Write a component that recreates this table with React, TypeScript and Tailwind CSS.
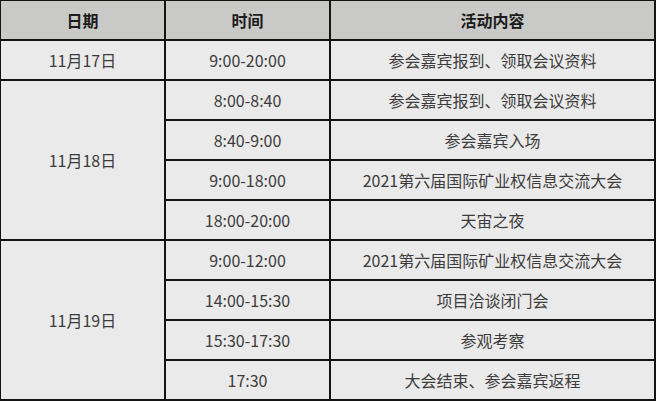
import React from 'react';

const font = { fontFamily: '"Noto Sans CJK SC", "Noto Sans", sans-serif' };

type Item = { time: string; text: string };

const days: { date: string; span: string; items: Item[] }[] = [
  { date: '11月17日', span: 'row-span-1', items: [{ time: '9:00-20:00', text: '参会嘉宾报到、领取会议资料' }] },
  {
    date: '11月18日',
    span: 'row-span-4',
    items: [
      { time: '8:00-8:40', text: '参会嘉宾报到、领取会议资料' },
      { time: '8:40-9:00', text: '参会嘉宾入场' },
      { time: '9:00-18:00', text: '2021第六届国际矿业权信息交流大会' },
      { time: '18:00-20:00', text: '天宙之夜' },
    ],
  },
  {
    date: '11月19日',
    span: 'row-span-4',
    items: [
      { time: '9:00-12:00', text: '2021第六届国际矿业权信息交流大会' },
      { time: '14:00-15:30', text: '项目洽谈闭门会' },
      { time: '15:30-17:30', text: '参观考察' },
      { time: '17:30', text: '大会结束、参会嘉宾返程' },
    ],
  },
];

const cell = 'flex items-center justify-center bg-[#ebeaea] text-[16px] text-[#3c3c3c]';
const head = 'flex items-center justify-center bg-[#c9cac8] text-[16px] font-bold text-[#1c1c1c]';

export default function App() {
  return (
    <div className="w-[656px] h-[401px] bg-white" style={font}>
      <div className="grid grid-cols-[163px_163px_323px] grid-rows-[repeat(10,38px)] gap-[2px] bg-[#141414] pt-px pl-px pr-[2px] pb-[2px]">
        <div className={head}>日期</div>
        <div className={head}>时间</div>
        <div className={head}>活动内容</div>
        {days.map((d) => (
          <React.Fragment key={d.date}>
            <div className={`${cell} ${d.span}`}>{d.date}</div>
            {d.items.map((it, i) => (
              <React.Fragment key={i}>
                <div className={`${cell} col-start-2`}>{it.time}</div>
                <div className={`${cell} col-start-3`}>{it.text}</div>
              </React.Fragment>
            ))}
          </React.Fragment>
        ))}
      </div>
    </div>
  );
}
